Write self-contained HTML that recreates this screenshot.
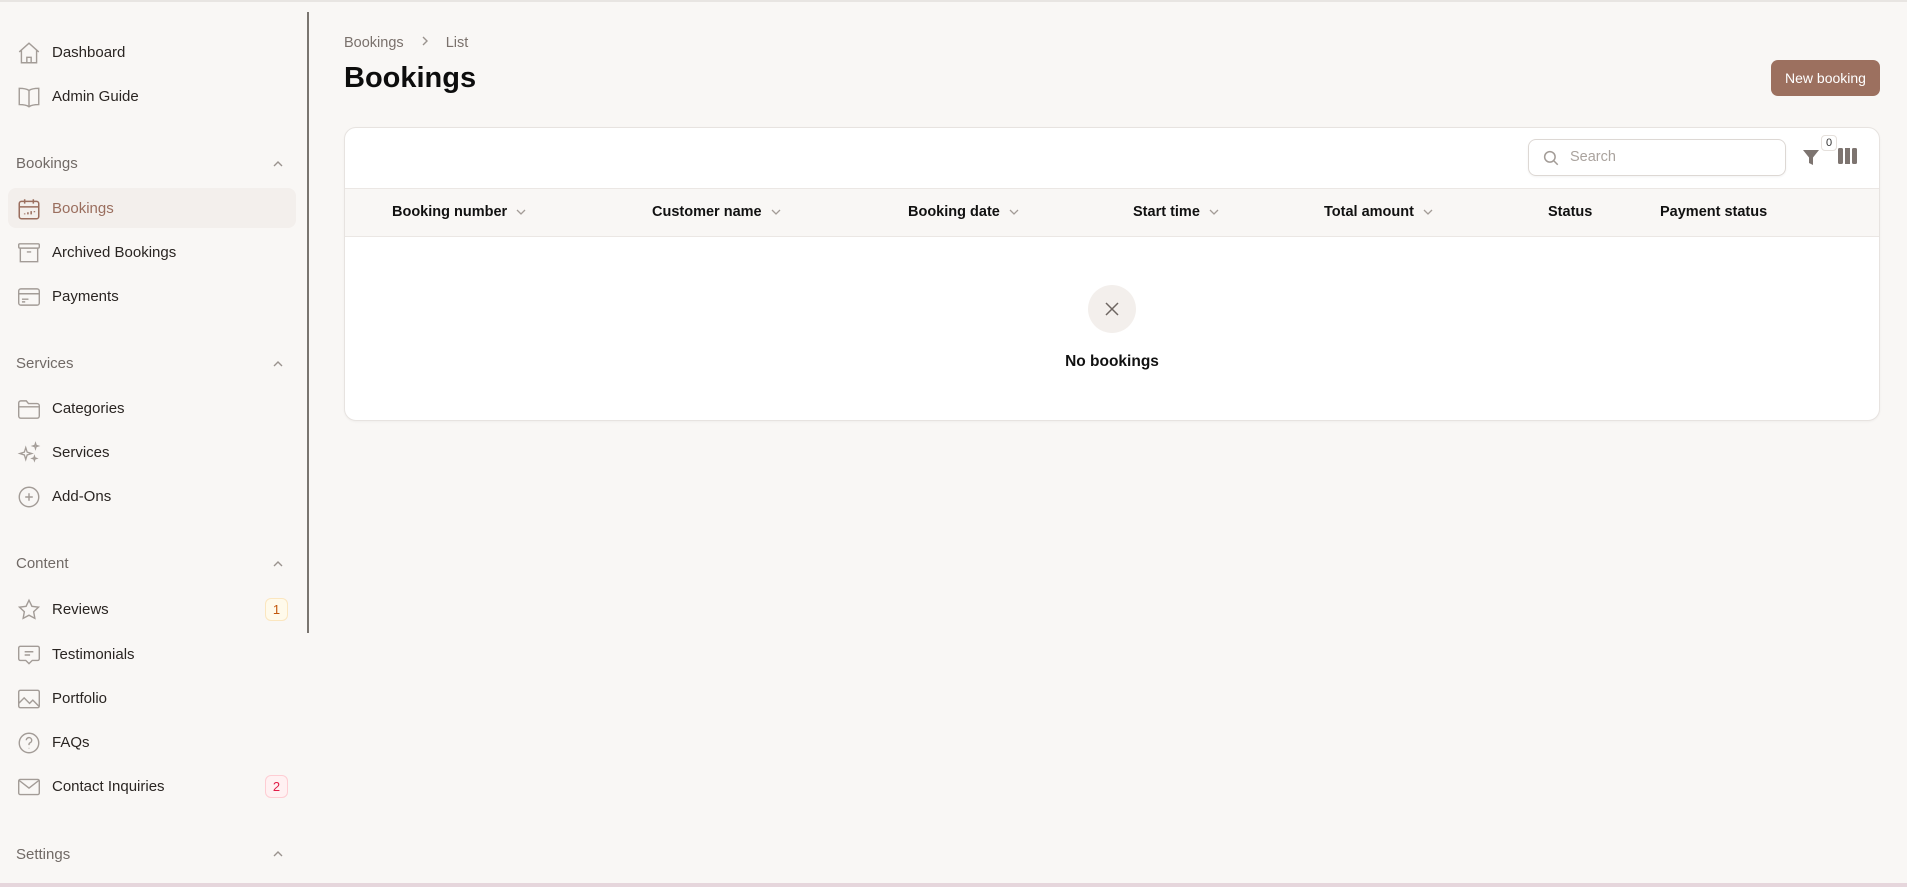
<!DOCTYPE html>
<html><head><meta charset="utf-8"><style>
*{box-sizing:border-box;margin:0;padding:0}
body{width:1907px;height:887px;background:#f9f7f5;font-family:"Liberation Sans",sans-serif;position:relative;overflow:hidden;color:#1a1a1a}
.topline{position:absolute;left:0;top:0;width:1907px;height:2px;background:#e8e5e2}
.bot{position:absolute;left:0;top:883px;width:1907px;height:4px;background:#e6d6dc}
.sb{position:absolute;left:0;top:0;width:308px;height:887px}
.vline{position:absolute;left:307px;top:12px;width:2px;height:621px;background:#7a7570}
.it{position:absolute;left:8px;width:288px;height:40px;display:flex;align-items:center;font-size:15px;color:#2a2522}
.it svg{position:absolute;left:8px;top:8px}
.it span{position:absolute;left:44px}
.it.act{background:#f3efec;border-radius:8px;color:#9a6e5e}
.sec{position:absolute;left:16px;font-size:15px;color:#716a66}
.chev{position:absolute;left:271px}
.badge{position:absolute;left:257px;top:9px;width:23px;height:23px;border-radius:6px;font-size:13px;display:flex;align-items:center;justify-content:center}
.main{position:absolute;left:344px}
.card{position:absolute;left:344px;top:127px;width:1536px;height:294px;background:#fff;border:1px solid #e7e3e0;border-radius:12px;box-shadow:0 1px 2px rgba(0,0,0,.04)}
.hdr{position:absolute;left:0;top:60px;width:1534px;height:49px;background:#f9f7f5;border-top:1px solid #ebe7e4;border-bottom:1px solid #ebe7e4}
.th{position:absolute;top:15px;font-size:14.5px;font-weight:bold;color:#111;white-space:nowrap}
.th svg{margin-left:8px;vertical-align:middle}
</style></head><body>
<div class="topline"></div>
<div class="sb">
<div class="it" style="top:32px"><svg width="26" height="26" viewBox="0 0 24 24" fill="none" stroke="#a39c97" stroke-width="1.3"><path d="M3 11 12 3l9 8M5 9.5V21h14V9.5M10 21v-5h4v5"/></svg><span>Dashboard</span></div>
<div class="it" style="top:76px"><svg width="26" height="26" viewBox="0 0 24 24" fill="none" stroke="#a39c97" stroke-width="1.3"><path d="M12 6c-2-1.5-5-2-9-2v15c4 0 7 .5 9 2 2-1.5 5-2 9-2V4c-4 0-7 .5-9 2zM12 6v15"/></svg><span>Admin Guide</span></div>
<div class="sec" style="top:155px">Bookings</div><svg class="chev" style="top:157px" width="14" height="14" viewBox="0 0 14 14" fill="none" stroke="#9a938e" stroke-width="1.4"><path d="M3 9l4-4 4 4"/></svg>
<div class="it act" style="top:188px"><svg width="26" height="26" viewBox="0 0 24 24" fill="none" stroke="#9a6e5e" stroke-width="1.4"><rect x="3" y="5" width="18" height="16" rx="2"/><path d="M3 10h18M8 3v4M16 3v4M8 16v1M11 15v2M14 14v3M17 14v1"/></svg><span>Bookings</span></div>
<div class="it" style="top:232px"><svg width="26" height="26" viewBox="0 0 24 24" fill="none" stroke="#a39c97" stroke-width="1.3"><rect x="2.5" y="3.5" width="19" height="4" rx="1"/><path d="M4 7.5V20h16V7.5M10 11h4"/></svg><span>Archived Bookings</span></div>
<div class="it" style="top:276px"><svg width="26" height="26" viewBox="0 0 24 24" fill="none" stroke="#a39c97" stroke-width="1.3"><rect x="2.5" y="4.5" width="19" height="15" rx="2"/><path d="M2.5 9h19M5.5 14h6M5.5 16.5h3"/></svg><span>Payments</span></div>
<div class="sec" style="top:355px">Services</div><svg class="chev" style="top:357px" width="14" height="14" viewBox="0 0 14 14" fill="none" stroke="#9a938e" stroke-width="1.4"><path d="M3 9l4-4 4 4"/></svg>
<div class="it" style="top:388px"><svg width="26" height="26" viewBox="0 0 24 24" fill="none" stroke="#a39c97" stroke-width="1.3"><path d="M2.5 6.5a2 2 0 0 1 2-2h5l2 2.5h8a2 2 0 0 1 2 2v9.5a2 2 0 0 1-2 2h-15a2 2 0 0 1-2-2zM2.5 10h19"/></svg><span>Categories</span></div>
<div class="it" style="top:432px"><svg width="26" height="26" viewBox="0 0 24 24" fill="none" stroke="#a39c97" stroke-width="1.2"><path d="M9 7l1.3 4.2L14.5 12.5l-4.2 1.3L9 18l-1.3-4.2L3.5 12.5l4.2-1.3zM18 3l.6 1.9 1.9.6-1.9.6L18 8l-.6-1.9-1.9-.6 1.9-.6zM17 15l.5 1.5 1.5.5-1.5.5L17 19l-.5-1.5L15 17l1.5-.5z"/></svg><span>Services</span></div>
<div class="it" style="top:476px"><svg width="26" height="26" viewBox="0 0 24 24" fill="none" stroke="#a39c97" stroke-width="1.3"><circle cx="12" cy="12" r="9"/><path d="M12 8.5v7M8.5 12h7"/></svg><span>Add-Ons</span></div>
<div class="sec" style="top:555px">Content</div><svg class="chev" style="top:557px" width="14" height="14" viewBox="0 0 14 14" fill="none" stroke="#9a938e" stroke-width="1.4"><path d="M3 9l4-4 4 4"/></svg>
<div class="it" style="top:589px"><svg width="26" height="26" viewBox="0 0 24 24" fill="none" stroke="#a39c97" stroke-width="1.3"><path d="M12 3l2.7 5.6 6.1.8-4.5 4.2 1.1 6.1L12 16.8l-5.4 2.9 1.1-6.1-4.5-4.2 6.1-.8z"/></svg><span>Reviews</span><div class="badge" style="background:#fffaeb;border:1px solid #fbe6bf;color:#c2570c">1</div></div>
<div class="it" style="top:634px"><svg width="26" height="26" viewBox="0 0 24 24" fill="none" stroke="#a39c97" stroke-width="1.3"><path d="M4 4h16a1.5 1.5 0 0 1 1.5 1.5v10A1.5 1.5 0 0 1 20 17h-5l-3 3-3-3H4a1.5 1.5 0 0 1-1.5-1.5v-10A1.5 1.5 0 0 1 4 4zM8 9h8M8 12h5"/></svg><span>Testimonials</span></div>
<div class="it" style="top:678px"><svg width="26" height="26" viewBox="0 0 24 24" fill="none" stroke="#a39c97" stroke-width="1.3"><rect x="2.5" y="4" width="19" height="16" rx="1.5"/><path d="M2.5 16l5-5 5 5 3-3 6 6M16 8.5h.01"/></svg><span>Portfolio</span></div>
<div class="it" style="top:722px"><svg width="26" height="26" viewBox="0 0 24 24" fill="none" stroke="#a39c97" stroke-width="1.3"><circle cx="12" cy="12" r="9"/><path d="M9.5 9.5a2.5 2.5 0 1 1 3.5 2.3c-.6.3-1 .8-1 1.5v.7M12 16.5v.5"/></svg><span>FAQs</span></div>
<div class="it" style="top:766px"><svg width="26" height="26" viewBox="0 0 24 24" fill="none" stroke="#a39c97" stroke-width="1.3"><rect x="2.5" y="5" width="19" height="14" rx="1.5"/><path d="M3 6l9 7 9-7"/></svg><span>Contact Inquiries</span><div class="badge" style="background:#fff1f2;border:1px solid #fecdd3;color:#e11d48">2</div></div>
<div class="sec" style="top:846px">Settings</div><svg class="chev" style="top:847px" width="14" height="14" viewBox="0 0 14 14" fill="none" stroke="#9a938e" stroke-width="1.4"><path d="M3 9l4-4 4 4"/></svg>
</div>
<div class="vline"></div>
<div class="main" style="top:34px;font-size:14.5px;color:#7a716c">Bookings <svg width="14" height="14" viewBox="0 0 14 14" fill="none" stroke="#9a938e" stroke-width="1.4" style="margin:0 10px;vertical-align:-1px"><path d="M5 3l4 4-4 4"/></svg> List</div>
<div class="main" style="top:62px;font-size:29px;font-weight:bold;color:#0d0d0d">Bookings</div>
<div style="position:absolute;left:1771px;top:60px;width:109px;height:36px;background:#9c705f;border-radius:7px;color:#fff;font-size:14px;display:flex;align-items:center;justify-content:center;font-weight:500">New booking</div>
<div class="card">
<div style="position:absolute;left:1183px;top:11px;width:258px;height:37px;border:1px solid #ddd8d4;border-radius:8px;box-shadow:0 1px 2px rgba(0,0,0,.05)"><svg style="position:absolute;left:13px;top:9px" width="18" height="18" viewBox="0 0 24 24" fill="none" stroke="#a39c97" stroke-width="2"><circle cx="10.5" cy="10.5" r="7"/><path d="M16 16l5 5"/></svg><span style="position:absolute;left:41px;top:9px;font-size:14.5px;color:#aaa39e">Search</span></div>
<svg style="position:absolute;left:1456px;top:19px" width="20" height="20" viewBox="0 0 20 20"><path d="M2 3h16l-6 7.5V18l-4-2v-5.5z" fill="#7d7470"/></svg>
<div style="position:absolute;left:1476px;top:7px;width:16px;height:16px;background:#fff;border:1px solid #e5e0dc;border-radius:4px;font-size:11px;text-align:center;line-height:14px;color:#333">0</div>
<svg style="position:absolute;left:1493px;top:20px" width="19" height="16" viewBox="0 0 19 16"><rect x="0" y="0" width="5" height="16" rx="1.5" fill="#7d7470"/><rect x="7" y="0" width="5" height="16" fill="#7d7470"/><rect x="14" y="0" width="5" height="16" rx="1.5" fill="#7d7470"/></svg>
<div class="hdr">
<div class="th" style="left:47px">Booking number<svg width="12" height="12" viewBox="0 0 12 12" fill="none" stroke="#a39c97" stroke-width="1.3"><path d="M2 4l4 4 4-4"/></svg></div>
<div class="th" style="left:307px">Customer name<svg width="12" height="12" viewBox="0 0 12 12" fill="none" stroke="#a39c97" stroke-width="1.3"><path d="M2 4l4 4 4-4"/></svg></div>
<div class="th" style="left:563px">Booking date<svg width="12" height="12" viewBox="0 0 12 12" fill="none" stroke="#a39c97" stroke-width="1.3"><path d="M2 4l4 4 4-4"/></svg></div>
<div class="th" style="left:788px">Start time<svg width="12" height="12" viewBox="0 0 12 12" fill="none" stroke="#a39c97" stroke-width="1.3"><path d="M2 4l4 4 4-4"/></svg></div>
<div class="th" style="left:979px">Total amount<svg width="12" height="12" viewBox="0 0 12 12" fill="none" stroke="#a39c97" stroke-width="1.3"><path d="M2 4l4 4 4-4"/></svg></div>
<div class="th" style="left:1203px">Status</div>
<div class="th" style="left:1315px">Payment status</div>
</div>
<div style="position:absolute;left:743px;top:157px;width:48px;height:48px;border-radius:50%;background:#f3efec"><svg style="position:absolute;left:15px;top:15px" width="18" height="18" viewBox="0 0 18 18" fill="none" stroke="#6d6561" stroke-width="1.5"><path d="M3 3l12 12M15 3L3 15"/></svg></div>
<div style="position:absolute;left:0;width:1534px;top:225px;text-align:center;font-size:15.5px;font-weight:bold;color:#111">No bookings</div>
</div>
<div class="bot"></div>
</body></html>
